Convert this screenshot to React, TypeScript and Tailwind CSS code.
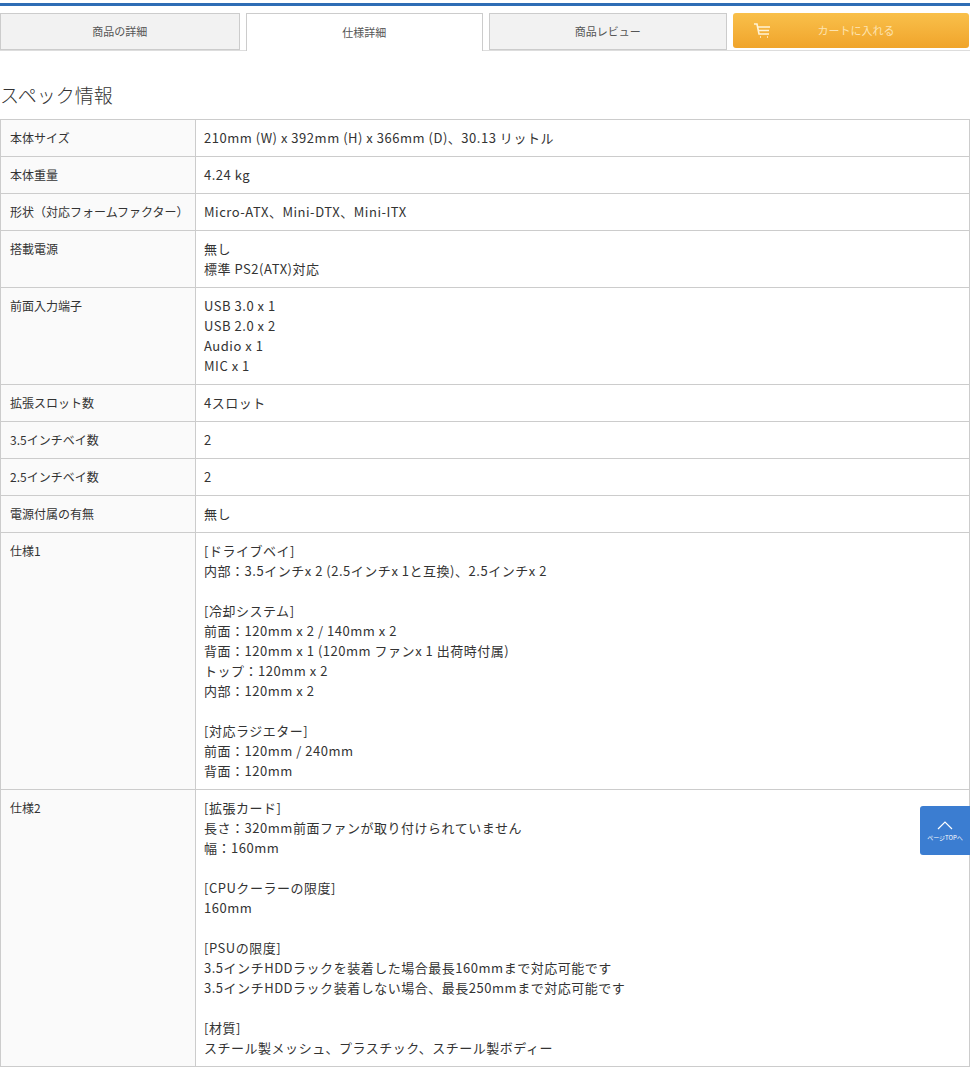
import React from "react";

const rows: [string, string[]][] = [
  ["本体サイズ", ["210mm (W) x 392mm (H) x 366mm (D)、30.13 リットル"]],
  ["本体重量", ["4.24 kg"]],
  ["形状（対応フォームファクター）", ["Micro-ATX、Mini-DTX、Mini-ITX"]],
  ["搭載電源", ["無し", "標準 PS2(ATX)対応"]],
  ["前面入力端子", ["USB 3.0 x 1", "USB 2.0 x 2", "Audio x 1", "MIC x 1"]],
  ["拡張スロット数", ["4スロット"]],
  ["3.5インチベイ数", ["2"]],
  ["2.5インチベイ数", ["2"]],
  ["電源付属の有無", ["無し"]],
  ["仕様1", ["[ドライブベイ]", "内部：3.5インチx 2 (2.5インチx 1と互換)、2.5インチx 2", "", "[冷却システム]", "前面：120mm x 2 / 140mm x 2", "背面：120mm x 1 (120mm ファンx 1 出荷時付属)", "トップ：120mm x 2", "内部：120mm x 2", "", "[対応ラジエター]", "前面：120mm / 240mm", "背面：120mm"]],
  ["仕様2", ["[拡張カード]", "長さ：320mm前面ファンが取り付けられていません", "幅：160mm", "", "[CPUクーラーの限度]", "160mm", "", "[PSUの限度]", "3.5インチHDDラックを装着した場合最長160mmまで対応可能です", "3.5インチHDDラック装着しない場合、最長250mmまで対応可能です", "", "[材質]", "スチール製メッシュ、プラスチック、スチール製ボディー"]],
];

export default function App() {
  return (
    <div className="w-[970px] bg-white text-[#333] relative" style={{ fontFamily: '"Noto Sans CJK JP", "Noto Sans", sans-serif' }}>
      <div className="h-[3px]" />
      <div className="h-[3px] bg-[#2f6db5]" />
      <div className="flex gap-[6px] mt-[7px] border-b border-[#ddd] pr-[1px]">
        <div className="w-[240px] h-[37px] flex items-center justify-center bg-[#f2f2f2] border border-[#ccc] text-[11px] text-[#555]">商品の詳細</div>
        <div className="w-[238px] h-[38px] -mb-[1px] flex items-center justify-center bg-white border border-b-0 border-[#ccc] text-[11px] text-[#555]">仕様詳細</div>
        <div className="w-[238px] h-[37px] flex items-center justify-center bg-[#f2f2f2] border border-[#ccc] text-[11px] text-[#555]">商品レビュー</div>
        <div className="w-[237px] h-[35px] flex items-center rounded-[3px] bg-gradient-to-b from-[#f9c04a] to-[#f0a42a] text-[11px] text-[#fde3b0]">
          <svg width="20" height="18" viewBox="0 0 20 18" className="ml-[20px]" fill="none" stroke="#fff3d6" strokeWidth="1.6">
            <path d="M1 2h3l2 10h10" />
            <path d="M5 5h12M6 8.5h10" />
            <path d="M7 15h1M14 15h1" />
          </svg>
          <span className="ml-[45px]">カートに入れる</span>
        </div>
      </div>
      <h2 className="text-[19px] font-light mt-[30px] mb-[9px] text-[#333]">スペック情報</h2>
      <table className="w-[970px] border-collapse text-[13px]">
        <tbody>
          {rows.map(([k, v]) => (
            <tr key={k}>
              <td className="w-[195px] border border-[#ccc] bg-[#fafafa] px-[9px] py-[8px] align-top text-[12px] leading-[20px]">{k}</td>
              <td className="border border-[#ccc] px-[8px] py-[8px] align-top leading-[20px] text-[13px] tracking-[0.04em]">
                {v.map((l, i) => (
                  <div key={i} className="h-[20px]">{l}</div>
                ))}
              </td>
            </tr>
          ))}
        </tbody>
      </table>
      <div className="absolute left-[920px] top-[806px] w-[50px] h-[49px] bg-[#3b7dd1] rounded-l-[3px] flex flex-col items-center justify-center text-white">
        <svg width="16" height="10" viewBox="0 0 16 10" fill="none" stroke="#fff" strokeWidth="1.2"><path d="M1 9l7-7 7 7" /></svg>
        <span className="text-[6px] mt-[3px]">ページTOPへ</span>
      </div>
    </div>
  );
}
